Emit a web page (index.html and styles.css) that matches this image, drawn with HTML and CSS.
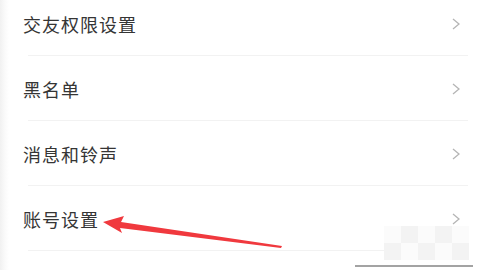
FILE: index.html
```html
<!DOCTYPE html>
<html lang="zh-CN">
<head>
  <meta charset="UTF-8" />
  <title>设置</title>
  <link rel="stylesheet" href="styles.css">
</head>
<body>
  <div class="page">
    <ul class="menu">
      <li class="menu-item"><span>交友权限设置</span><svg class="chev" viewBox="0 0 8 12"><polyline points="1,1 7,6 1,11" /></svg></li>
      <li class="menu-item"><span>黑名单</span><svg class="chev" viewBox="0 0 8 12"><polyline points="1,1 7,6 1,11" /></svg></li>
      <li class="menu-item"><span>消息和铃声</span><svg class="chev" viewBox="0 0 8 12"><polyline points="1,1 7,6 1,11" /></svg></li>
      <li class="menu-item"><span>账号设置</span><svg class="chev" viewBox="0 0 8 12"><polyline points="1,1 7,6 1,11" /></svg></li>
    </ul>

    <!-- 标注箭头 -->
    <svg class="mark-arrow" viewBox="0 0 480 270">
      <polygon points="103,222 124,216 121,222 282,246 281,248 120,228 122,233" />
    </svg>

    <div class="checker">
      <i></i><i class="b"></i><i></i><i class="b"></i><i></i>
      <i class="b"></i><i></i><i class="b"></i><i></i><i class="b"></i>
    </div>
    <div class="home-bar"></div>
  </div>
</body>
</html>
```

FILE: styles.css
```css
* { box-sizing: border-box; }
body {
  margin: 0;
  background: #fff;
  font-family: "Noto Sans CJK SC", "Noto Sans", sans-serif;
}
.page {
  position: relative;
  width: 480px;
  height: 270px;
  overflow: hidden;
  background: linear-gradient(to right, #f1f1f1 0, #fafafa 5px, #fff 9px);
}
.menu {
  list-style: none;
  margin: -9px 0 0;
  padding: 0;
}
.menu-item {
  height: 65px;
  display: flex;
  align-items: center;
  justify-content: space-between;
  padding: 0 20px 0 23px;
  font-size: 18px;
  letter-spacing: 1px;
  color: #353535;
  position: relative;
}
.menu-item::after {
  content: "";
  position: absolute;
  left: 28px;
  right: 12px;
  bottom: 0;
  height: 1px;
  background: #f2f2f2;
}
.chev {
  width: 8px;
  height: 12px;
}
.chev polyline {
  fill: none;
  stroke: #b5b5b5;
  stroke-width: 1.3;
}
.mark-arrow {
  position: absolute;
  left: 0;
  top: 0;
  width: 480px;
  height: 270px;
}
.mark-arrow polygon {
  fill: #f0393e;
}
.checker {
  position: absolute;
  left: 384px;
  top: 226px;
  width: 85px;
  display: grid;
  grid-template-columns: repeat(5, 17px);
  grid-auto-rows: 17px;
}
.checker i { background: #fbfbfb; }
.checker i.b { background: #f3f3f3; }
.home-bar {
  position: absolute;
  left: 355px;
  top: 265px;
  width: 118px;
  height: 2px;
  background: #a3a3a3;
}
```
